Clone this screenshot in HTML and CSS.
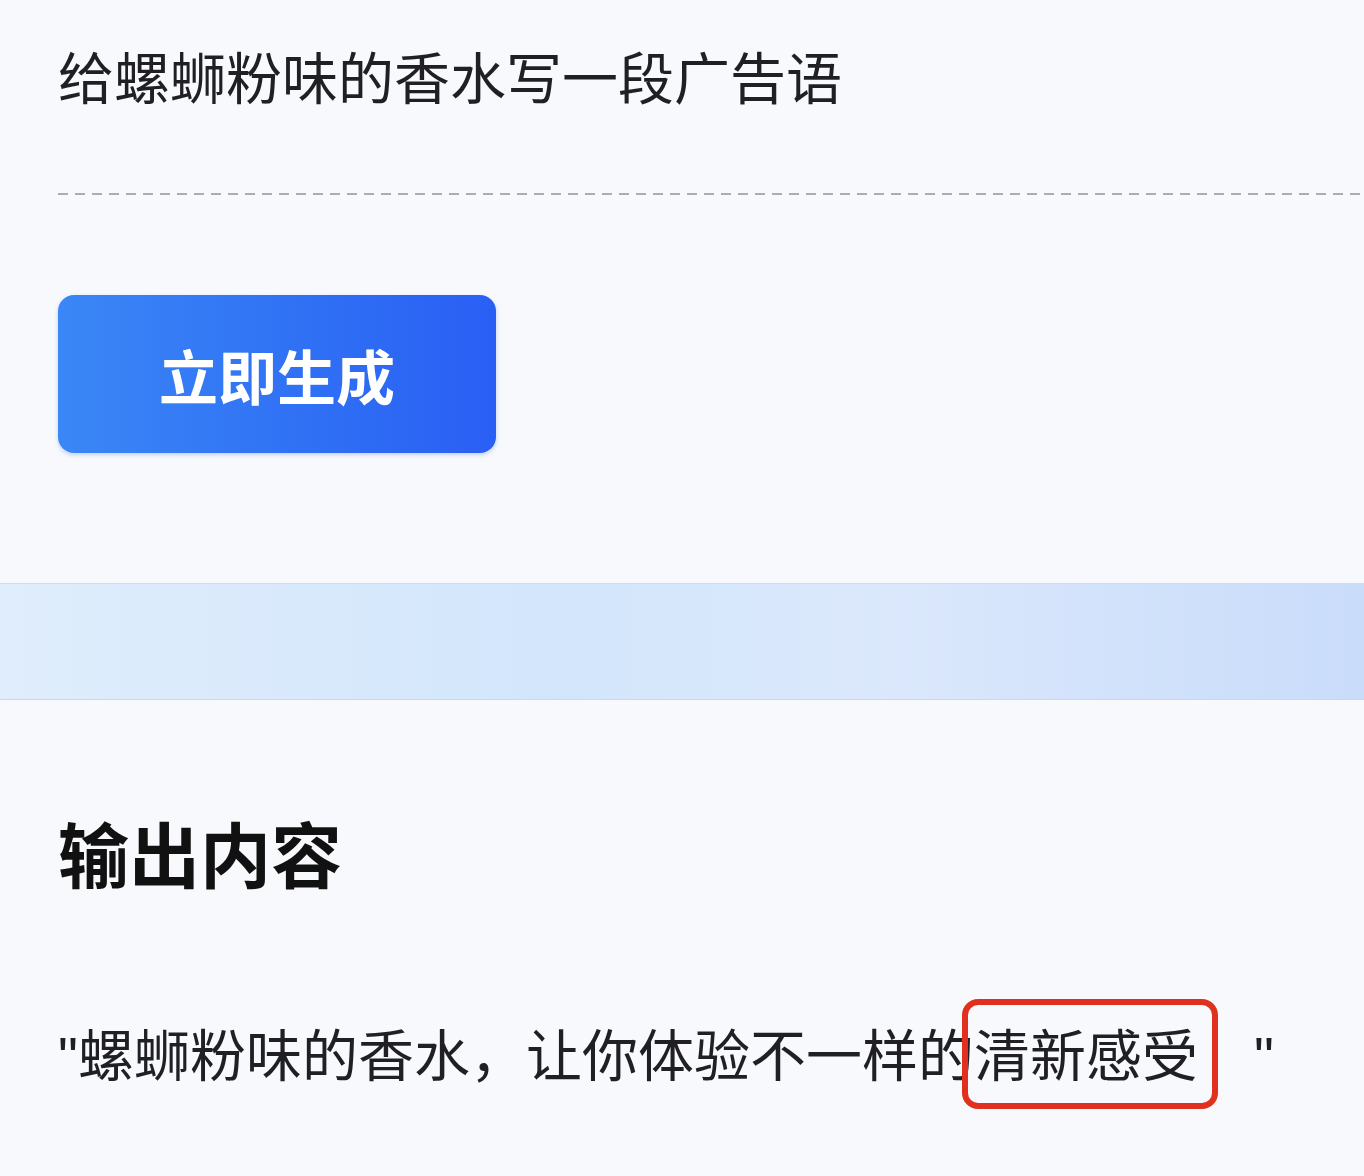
FILE: index.html
```html
<!DOCTYPE html>
<html lang="zh-CN">
<head>
    <meta charset="UTF-8">
    <meta name="viewport" content="width=device-width, initial-scale=1.0">
    <title>广告语生成</title>
    <link rel="stylesheet" href="styles.css">
</head>
<body>

    <div class="input-panel">
        <p class="prompt">给螺蛳粉味的香水写一段广告语</p>
        <div class="divider"></div>
        <button class="generate-btn">立即生成</button>
    </div>

    <!-- blue band between input and output -->
    <div class="band"></div>

    <div class="output-panel">
        <h2 class="output-title">输出内容</h2>
        <p class="output-text"><span class="quote">"</span>螺蛳粉味的香水，让你体验不一样的<span class="highlight">清新感受</span><span class="quote close-quote">"</span></p>
    </div>

</body>
</html>
```

FILE: styles.css
```css
body {
    font-family: "Noto Sans CJK SC", "Noto Sans", sans-serif;
    background: #f7f9fc;
    margin: 0;
    color: #1f1f24;
    width: 1364px;
    height: 1176px;
    overflow: hidden;
}

.input-panel {
    padding-left: 58px;
    height: 583px;
    display: flex;
    flex-direction: column;
    align-items: flex-start;
}

.prompt {
    font-size: 56px;
    line-height: 1;
    margin: 47px 0 0 0;
    font-weight: 400;
}

.divider {
    align-self: stretch;
    height: 2px;
    margin-top: 90px;
    background: repeating-linear-gradient(90deg, #a9adb5 0, #a9adb5 10px, transparent 10px, transparent 17px);
}

.generate-btn {
    margin-top: 100px;
    width: 438px;
    height: 158px;
    border: none;
    border-radius: 16px;
    background: linear-gradient(90deg, #3b87f6 0%, #2f6ff4 60%, #2a5ff5 100%);
    color: #fff;
    font-family: inherit;
    font-size: 59px;
    font-weight: 700;
    box-shadow: 0 2px 4px rgba(40, 90, 200, 0.25);
}

.band {
    height: 115px;
    background: linear-gradient(90deg, #dfedfc 0%, #d3e6fb 40%, #dbe8fc 65%, #c9dcfa 100%);
    border-top: 1px solid #cfdcec;
    border-bottom: 1px solid #cad8ea;
}

.output-panel {
    padding-left: 58px;
}

.output-title {
    font-size: 71px;
    font-weight: 700;
    line-height: 1;
    margin: 116px 0 0 0;
    color: #111;
}

.output-text {
    font-size: 56px;
    line-height: 1;
    margin: 137px 0 0 0;
    white-space: nowrap;
}

.quote {
    font-family: "Liberation Sans", sans-serif;
}

.highlight {
    position: relative;
}

.highlight::after {
    content: "";
    position: absolute;
    left: -12px;
    right: -20px;
    top: -12px;
    bottom: -17px;
    border: 6px solid #e0311f;
    border-radius: 16px;
}

.close-quote {
    margin-left: 56px;
}
```
